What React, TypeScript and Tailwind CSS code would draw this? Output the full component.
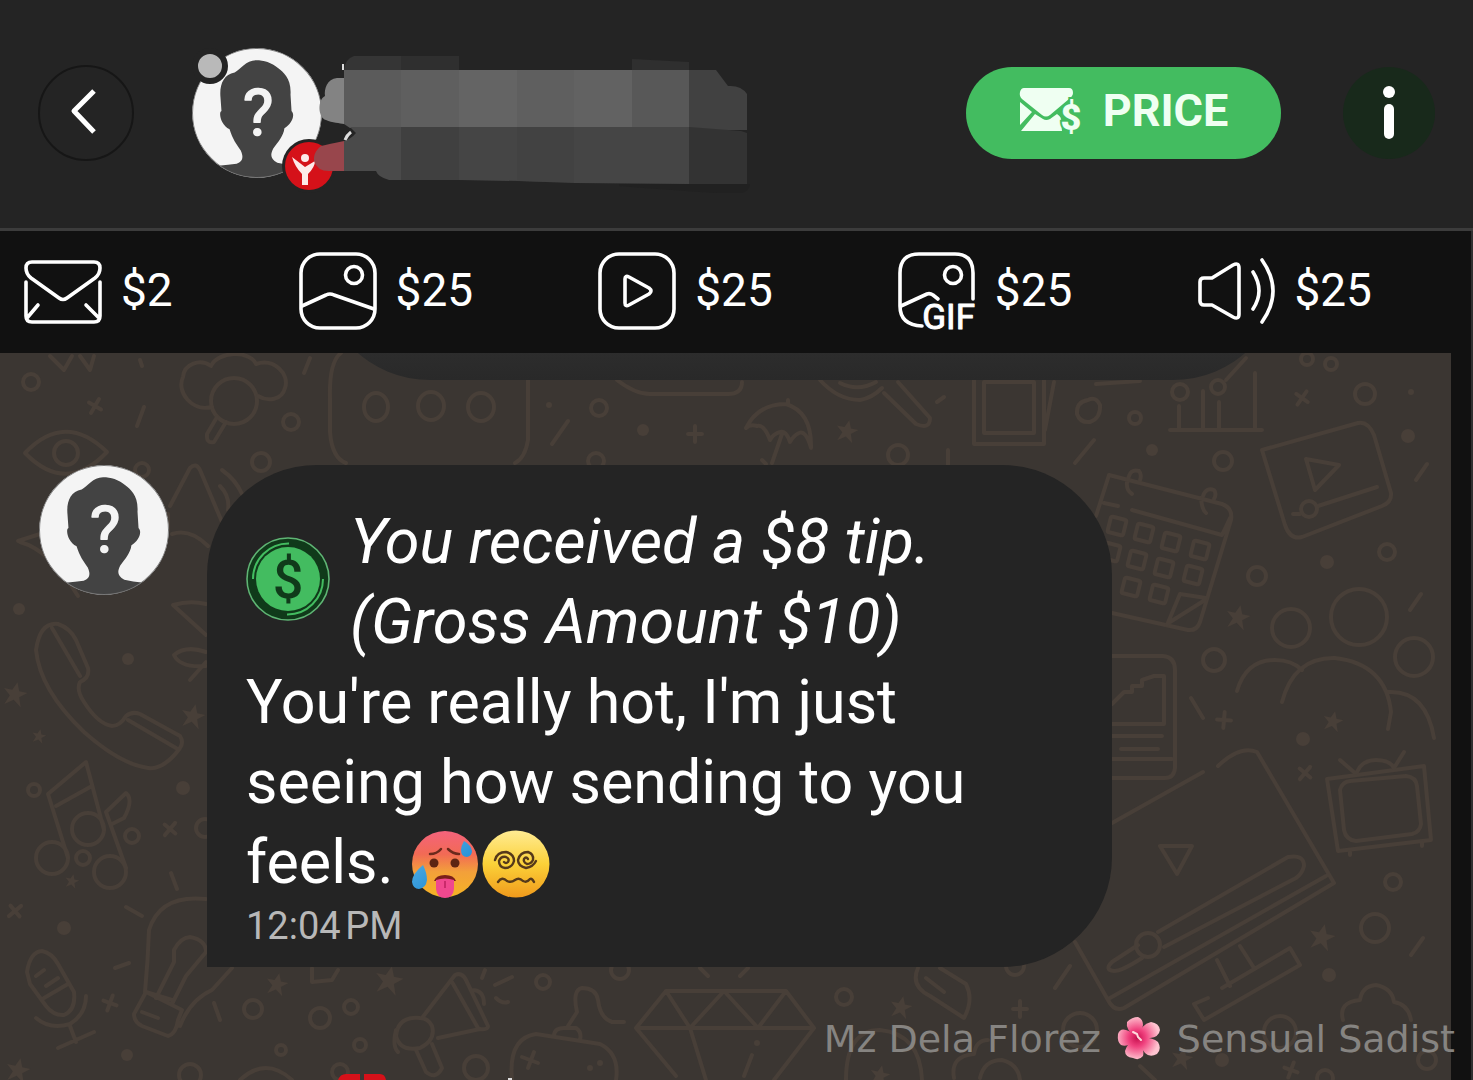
import React from "react";

const STAR = "M0 -10 L3 -3 L10 -3 L4 2 L7 10 L0 5 L-7 10 L-4 2 L-10 -3 L-3 -3 Z";

const rings: [number, number, number][] = [
  [31, 382, 8], [291, 422, 8], [261, 462, 9], [142, 470, 7], [599, 408, 8], [596, 461, 8], [898, 455, 10],
  [1223, 461, 9], [1365, 394, 10], [1307, 359, 6], [1331, 364, 6], [1135, 418, 6], [1257, 576, 9],
  [1387, 552, 8], [1291, 628, 19], [1359, 617, 28], [1414, 657, 19], [1214, 660, 11], [1393, 882, 8],
  [1375, 928, 14], [34, 790, 6], [52, 858, 16], [88, 829, 16], [110, 872, 16], [83, 858, 7], [132, 836, 7],
  [205, 828, 9], [253, 1009, 9], [320, 1018, 10], [351, 1007, 7], [360, 1045, 6], [281, 1050, 5],
  [190, 1075, 11], [340, 1072, 8], [543, 982, 7], [476, 1068, 12], [620, 970, 9], [844, 997, 8],
  [1080, 1030, 17], [1280, 1032, 16], [1427, 1060, 9], [1015, 966, 9], [1325, 1078, 8],
];

const dots: [number, number, number][] = [
  [549, 405, 3], [643, 430, 6], [1152, 450, 6], [1408, 436, 7], [1327, 562, 7], [1303, 739, 7],
  [1329, 975, 7], [19, 609, 6], [128, 659, 6], [183, 788, 7], [64, 928, 7], [127, 1055, 6], [1411, 392, 3],
  [1222, 1060, 7], [757, 1043, 3], [590, 1068, 3], [600, 1063, 3],
];

const stars: [number, number, number][] = [
  [847, 431, 1.1], [1238, 617, 1.2], [1333, 721, 1], [1322, 937, 1.3], [15, 694, 1.2], [39, 736, 0.7],
  [193, 716, 1.2], [72, 881, 0.7], [277, 984, 1.1], [389, 980, 1.4], [18, 1070, 1.2], [901, 1007, 1.1],
  [1182, 1058, 1.1], [880, 1075, 1],
];

const crosses: [number, number, number][] = [
  [95, 406, 30], [695, 434, 0], [1302, 398, 35], [1224, 720, 5], [1305, 773, 40], [170, 829, 40],
  [110, 1003, 20], [1020, 1009, 0], [1291, 1070, 20], [15, 911, 50],
];

const ticks =
  "M144 407L137 426 M568 421L552 444 M944 397L937 402 M1094 440L1075 463 M1427 464L1416 480 M1421 594L1410 610 M1191 698L1203 718 M1423 938L1411 955 M1070 966L1055 988 M171 873L177 889 M126 907L142 916 M115 968L129 963 M214 1003L220 1020 M140 360L142 366 M310 358L304 373 M948 450L948 465 M495 985L512 977 M482 978L485 970 M496 998Q502 1004 508 1002 M700 968L708 976 M748 968L740 976";

function Wallpaper() {
  return (
    <svg
      className="absolute inset-0 h-full w-full"
      viewBox="0 353 1451 727"
      preserveAspectRatio="xMinYMin slice"
      fill="none"
      stroke="#483f38"
      strokeWidth="4"
      strokeLinecap="round"
      strokeLinejoin="round"
      aria-hidden="true"
    >
      {rings.map(([x, y, r]) => (
        <circle key={`${x}-${y}`} cx={x} cy={y} r={r} />
      ))}
      {dots.map(([x, y, r]) => (
        <circle key={`${x}-${y}`} cx={x} cy={y} r={r} fill="#483f38" stroke="none" />
      ))}
      {stars.map(([x, y, s]) => (
        <path key={`${x}-${y}`} d={STAR} transform={`translate(${x} ${y}) rotate(12) scale(${s})`} fill="#483f38" stroke="none" />
      ))}
      {crosses.map(([x, y, a]) => (
        <path key={`${x}-${y}`} d="M0 -8V8M-7 0H7" transform={`translate(${x} ${y}) rotate(${a})`} />
      ))}
      <path d={ticks} />
      {/* eye */}
      <path d="M25 453Q65 411 107 452Q66 495 25 453Z" />
      <circle cx="66" cy="453" r="12" />
      {/* tree */}
      <circle cx="234" cy="401" r="23" />
      <path d="M212 407C192 412 176 392 183 377C184 364 200 358 211 366C218 351 250 350 256 364C274 358 290 374 285 388C282 400 268 402 258 396" />
      <path d="M217 417L207 434Q206 444 214 442L226 422" />
      <path d="M50 356L64 370L72 356 M80 356L90 370L94 356" />
      {/* game pad */}
      <path d="M341 353Q329 362 330 398V432Q332 458 346 463 M528 380V440Q525 458 515 463" />
      <ellipse cx="376" cy="407" rx="12" ry="14" />
      <ellipse cx="431" cy="406" rx="13" ry="14" />
      <ellipse cx="481" cy="407" rx="13" ry="14" />
      <path d="M617 380Q635 394 650 394H728Q742 394 742 382" />
      {/* umbrella */}
      <path d="M746 428Q758 404 786 404Q812 412 811 448Q806 430 799 433Q794 435 790 442Q786 430 780 432Q773 434 770 440Q764 424 757 426Q750 424 746 428Z M788 400V404 M782 434L772 463 M762 460L766 464" />
      {/* magnifier */}
      <path d="M820 380Q838 400 860 400Q872 398 882 388 M840 383Q858 392 876 382 M884 393L916 424Q930 430 930 418L898 382" />
      {/* picture frame */}
      <path d="M974 380V444H1044V380 M984 382H1034V433H984Z M1045 430L1054 382" />
      <path d="M1088 400Q1076 402 1077 414Q1080 423 1090 422Q1101 418 1100 405Q1096 396 1088 400Z" />
      {/* chart */}
      <path d="M1170 430H1262 M1179 406V430 M1203 391V430 M1219 402V430 M1255 373V430 M1096 384L1140 381 M1226 380L1246 358" />
      <circle cx="1180" cy="392" r="8" />
      <circle cx="1218" cy="387" r="7" />
      {/* video card */}
      <path d="M1262 450L1358 423Q1368 421 1374 435L1391 493Q1392 502 1382 506L1302 537Q1290 540 1285 525Z M1306 459L1339 465L1315 490Z M1318 506L1377 487 M1293 514H1300" />
      <circle cx="1309" cy="509" r="8" />
      {/* calendar */}
      <path d="M1096 516L1109 475L1222 504Q1233 508 1231 520L1200 622Q1197 631 1188 630L1112 613 M1132 510L1222 535L1230 518 M1104 503L1118 506 M1127 482Q1126 490 1132 494 M1201 498Q1202 510 1206 513" />
      <path d="M1128 480Q1130 468 1139 471Q1142 475 1140 480 M1203 496Q1206 487 1214 490Q1217 494 1214 499" />
      <g>
        {[
          [1117, 526], [1144, 533], [1171, 542], [1200, 550], [1111, 552], [1137, 560], [1164, 568], [1193, 575], [1131, 587], [1159, 594],
        ].map(([x, y]) => (
          <rect key={`${x}-${y}`} x={x - 8} y={y - 8} width="16" height="16" rx="2" transform={`rotate(14 ${x} ${y})`} />
        ))}
      </g>
      <path d="M1167 625L1180 594L1206 598 M1170 622L1205 600" />
      {/* balloons and cloud */}
      <path d="M1237 691Q1246 660 1275 660Q1292 660 1302 670 M1282 702Q1294 657 1335 658Q1386 664 1391 712L1388 729 M1388 692Q1426 690 1434 738" />
      {/* phone with graph */}
      <path d="M1112 656H1163Q1175 657 1175 670V768Q1174 778 1165 778H1112 M1112 704L1124 692H1132V686H1142V680L1154 676H1164V724H1112 M1112 736H1162 M1121 749H1158 M1112 759H1172" />
      {/* television */}
      <path d="M1327 779L1424 766L1431 840L1338 851Z" />
      <path d="M1340 790Q1342 782 1350 781L1406 776Q1416 777 1417 786L1421 824Q1420 832 1412 834L1356 841Q1346 840 1344 830Z M1357 772Q1362 760 1376 760Q1390 760 1394 768 M1340 760L1355 773 M1404 752L1394 768 M1350 852V855 M1422 842V846" />
      {/* large monitor */}
      <path d="M1112 823L1203 772 M1218 766Q1240 745 1257 752L1334 883L1124 1008Q1114 1012 1108 1000L1075 942 M1110 998L1326 876 M1160 846H1192L1177 874Z" />
      <path d="M1158 932L1288 857Q1304 854 1304 866Q1302 874 1296 878L1164 947 M1138 945L1112 962Q1104 970 1114 971Q1122 971 1142 958" />
      <circle cx="1148" cy="945" r="12" />
      <path d="M1217 960L1230 986 M1240 946L1254 968 M1222 988L1290 948L1300 965L1204 1020L1194 1004L1208 998" />
      {/* small cloud */}
      <path d="M1343 1020Q1338 1002 1360 1000Q1362 986 1376 985Q1392 988 1394 1002Q1408 1004 1411 1020" />
      {/* telephone */}
      <path d="M36 650Q40 622 58 624Q70 628 76 640L88 668Q90 678 80 682Q76 690 84 702Q98 724 112 726Q120 726 126 716Q132 711 140 714L180 736Q184 742 180 748Q164 770 148 768Q120 764 84 732Q40 690 36 650Z M52 628L80 676 M128 720L176 748" />
      {/* speaker */}
      <path d="M170 506L190 468Q196 462 200 470L222 522 M172 534Q190 528 208 546 M222 470Q236 480 242 494 M220 486Q230 496 228 510 M168 514V530" />
      <path d="M173 605Q190 600 206 604 M173 605L206 635 M206 652Q186 645 174 655Q180 668 206 666 M190 680L206 662" />
      <path d="M18 541L40 534 M20 542Q50 550 78 596" />
      {/* music notes */}
      <path d="M68 858L48 794L86 762L104 830 M56 806L92 786 M126 868L106 812L126 793Q134 800 124 818L112 824" />
      {/* light bulb */}
      <path d="M206 899Q160 894 149 930Q148 960 145 992 M232 968L212 990Q190 1000 180 1026 M172 1000L146 992L134 1014Q134 1022 142 1026L168 1036Q176 1034 178 1020L182 1010L146 992 M156 998L174 962V950Q180 938 190 937Q206 940 206 952L186 976L172 1004 M142 1012L158 1018" />
      {/* microphone */}
      <path d="M27 972Q30 952 42 951Q52 953 58 964L74 992Q76 1010 64 1015Q54 1016 46 1006L30 984Z M36 976L44 970 M46 986L58 978 M44 998L68 984 M36 1018Q50 1030 70 1024Q86 1014 86 996 M70 1026L76 1042 M58 1048L94 1032" />
      {/* loudspeaker */}
      <path d="M422 1018L455 975Q462 972 466 980L488 1026Q488 1030 480 1029L438 1038 M452 982L478 1028 M472 990Q484 990 484 1004 M420 1018Q398 1016 396 1036Q400 1052 420 1048Q436 1040 432 1026Q428 1018 420 1018Z M416 1050L426 1072Q436 1080 442 1068L432 1044" />
      {/* controller and joystick */}
      <path d="M512 1080Q508 1038 536 1034L600 1044Q620 1054 616 1080 M554 1036Q554 1028 564 1028H576Q582 1032 580 1040 M568 1026L577 1012Q572 990 582 988Q596 988 598 1000Q600 1018 612 1022H624 M522 1057L538 1063 M534 1052L528 1068" />
      {/* diamond */}
      <path d="M636 1028L666 991H786L814 1028H636L676 1076 M666 991L690 1028L724 991L758 1028L786 991 M690 1028L706 1080 M814 1028L774 1080 M752 1055L744 1076" />
      {/* knife and badge */}
      <path d="M918 968Q910 986 930 996L964 1018Q974 1000 966 984L940 968 M926 978L944 992" />
      <path d="M846 1080Q846 1030 880 1030Q920 1034 922 1080 M954 1078Q950 1056 974 1054Q976 1040 988 1040 M980 1078Q984 1060 1002 1060Q1018 1064 1020 1080" />
      <path d="M312 968V982L332 980L338 970 M398 1052Q392 1046 396 1030 M240 1080Q266 1056 292 1080 M1140 1066L1155 1080" />
    </svg>
  );
}

function Avatar() {
  return (
    <svg className="size-[130px] shrink-0 rounded-full" viewBox="0 0 128 128" role="img" aria-label="Anonymous user">
      <circle cx="64" cy="64" r="64" fill="#f4f4f4" />
      <path
        d="M63 12C53 12 48 21 42 24C31 26 27 36 28 48L29 62C26 63 28 76 37 80C40 90 44 95 48 101C51 108 50 112 44 114Q36 115 26 116Q44 128 64 128Q86 128 103 116Q92 115 84 113C77 109 77 105 80 99C85 92 90 87 91 79C98 75 102 66 98 62L97 46C98 30 90 24 85 20C78 14 71 12 63 12Z"
        fill="#434343"
      />
      <text
        x="65"
        y="86"
        textAnchor="middle"
        fontFamily="Roboto, sans-serif"
        fontSize="64"
        fill="#f4f4f4"
        stroke="#f4f4f4"
        strokeWidth="1.500"
        strokeLinejoin="round"
      >
        ?
      </text>
      <circle cx="64" cy="64" r="63.500" fill="none" stroke="#777" strokeWidth="1" />
    </svg>
  );
}

function HiddenName() {
  return (
    <svg className="relative -ml-2 h-40 w-[440px] shrink-0" viewBox="315 34 440 160" role="img" aria-label="Name hidden">
      <path d="M345 79H338C328 80 325 90 326 97C318 101 319 119 327 121C333 124 341 124 345 125Z" fill="#838383" />
      <path d="M345 71Q346 60 355 57H402V71Z" fill="#353535" />
      <path d="M402 57H460V71H402Z" fill="#2f2f2f" />
      <path d="M633 60L690 63V71H633Z" fill="#2f2f2f" />
      <path d="M345 71H402V129H351L345 125Z" fill="#5b5b5b" />
      <path d="M402 71H460V129H402Z" fill="#5f5f5f" />
      <path d="M460 71H518V129H460Z" fill="#646464" />
      <path d="M518 71H575V129H518Z" fill="#5f5f5f" />
      <path d="M575 71H633V129H575Z" fill="#626262" />
      <path d="M633 71H690V129H633Z" fill="#585858" />
      <path d="M690 71H717L729 87Q742 86 748 95V131H690Z" fill="#414141" />
      <path d="M351 128H402V181H390Q379 178 377 172H345V142Q352 140 357 134Z" fill="#4a4a4a" />
      <path d="M402 128H460V181H402Z" fill="#404040" />
      <path d="M460 128H575V183L460 181Z" fill="#454545" />
      <path d="M518 128H575V184L518 182Z" fill="#424242" />
      <path d="M575 128H690V185L575 184Z" fill="#454545" />
      <path d="M690 128L742 132L748 134V185H690Z" fill="#333" />
      <path d="M620 185H751Q750 195 735 195Q680 192 620 187Z" fill="#212121" />
      <path d="M345 142Q330 145 322 147Q314 153 315 162Q318 172 330 172H345Z" fill="#98464c" />
      <path d="M346 141Q348 136 352 133" stroke="#ddd" strokeWidth="3" fill="none" />
      <path d="M344 65V71" stroke="#ddd" strokeWidth="2" />
    </svg>
  );
}

function PriceButton() {
  return (
    <button type="button" className="flex h-[92px] w-[315px] shrink-0 items-center justify-center gap-4 rounded-full bg-[#43bc60] pb-1 text-white">
      <svg className="h-14 w-[68px]" viewBox="0 -4 68 56" aria-hidden="true">
        <path d="M5 1H50Q54 1 54 6Q54 9 50 12L31 28Q27 31 23 28L3 12Q0 9 1 5Q2 1 5 1Z" fill="#effff2" />
        <path d="M1 15L13 25L1 38Z M16 27L24 32Q27 34 31 32L38 27Q43 30 42 35L43 44H2Z" fill="#effff2" />
        <text x="52" y="43" textAnchor="middle" fontFamily="Roboto, sans-serif" fontWeight="900" fontSize="36" fill="#effff2" stroke="#43bc60" strokeWidth="4" paintOrder="stroke">
          $
        </text>
      </svg>
      <span className="text-[45px] leading-[52px] font-bold text-[#effff2]">PRICE</span>
    </button>
  );
}

const iconProps = {
  className: "size-20 shrink-0 overflow-visible",
  viewBox: "0 0 80 80",
  fill: "none",
  stroke: "#fff",
  strokeWidth: 3.6,
  strokeLinecap: "round" as const,
  strokeLinejoin: "round" as const,
  "aria-hidden": true,
};

function MailIcon() {
  return (
    <svg {...iconProps}>
      <path d="M9 11H71Q77 11 77 17Q77 23 72 27L44 47Q40 50 36 47L8 27Q3 23 3 17Q3 11 9 11Z" />
      <path d="M3 31V65Q3 71 9 71H71Q77 71 77 65V31 M4 67L15 54 M76 67L63 54" />
    </svg>
  );
}
function ImageIcon() {
  return (
    <svg {...iconProps}>
      <rect x="3" y="3" width="74" height="74" rx="19" />
      <circle cx="56" cy="24" r="8.500" />
      <path d="M4 55L28 44Q32 42 36 44L76 58" />
    </svg>
  );
}
function VideoIcon() {
  return (
    <svg {...iconProps}>
      <rect x="3" y="3" width="74" height="74" rx="19" />
      <path d="M28 28Q28 24 32 26L52 37Q56 40 52 43L32 54Q28 56 28 52Z" />
    </svg>
  );
}
function GifIcon() {
  return (
    <svg {...iconProps}>
      <path d="M25 75Q3 74 3 55V22Q3 3 22 3H58Q76 3 76 22V48" />
      <circle cx="56" cy="24" r="8.500" />
      <path d="M4 55L30 43Q33 42 36 44L41 48" />
      <text x="78" y="78" textAnchor="end" fontFamily="Roboto, sans-serif" fontSize="35" fill="#fff" strokeWidth="1">
        GIF
      </text>
    </svg>
  );
}
function AudioIcon() {
  return (
    <svg {...iconProps}>
      <path d="M8 27H16L37 14Q43 11 43 17V63Q43 69 37 66L16 54H8Q4 54 4 50V31Q4 27 8 27Z" />
      <path d="M57 21Q69 40 57 58 M66 9Q88 40 66 71" />
    </svg>
  );
}

const prices = [
  { label: "Message", price: "$2", Icon: MailIcon },
  { label: "Photo", price: "$25", Icon: ImageIcon },
  { label: "Video", price: "$25", Icon: VideoIcon },
  { label: "GIF", price: "$25", Icon: GifIcon },
  { label: "Audio", price: "$25", Icon: AudioIcon },
];

function CoinIcon() {
  return (
    <svg className="size-[84px] shrink-0" viewBox="0 0 84 84" fill="none" aria-hidden="true">
      <circle cx="42" cy="42" r="41" fill="#103a1a" stroke="#5fb574" strokeWidth="1.600" />
      <circle cx="42" cy="42" r="32" fill="#43bc60" />
      <path d="M7 42A35.500 35.500 0 0 1 43 6.500 M77 42A35.500 35.500 0 0 1 41 77.500" stroke="#43bc60" strokeWidth="2" />
      <text x="42" y="61" textAnchor="middle" fontFamily="Roboto, sans-serif" fontWeight="500" fontSize="54" fill="#103a1a">
        $
      </text>
    </svg>
  );
}

function HotFace() {
  return (
    <svg className="inline-block size-[70px] align-[-16px]" viewBox="0 0 70 70" role="img" aria-label="Hot face">
      <defs>
        <linearGradient id="hot" x1="0" y1="0" x2="0" y2="1">
          <stop offset="0" stopColor="#f4637c" />
          <stop offset="0.35" stopColor="#f26a55" />
          <stop offset="0.62" stopColor="#f3a03a" />
          <stop offset="1" stopColor="#f5b325" />
        </linearGradient>
        <linearGradient id="drop" x1="0" y1="0" x2="1" y2="1">
          <stop offset="0" stopColor="#62b7e6" />
          <stop offset="1" stopColor="#0b7fd0" />
        </linearGradient>
      </defs>
      <circle cx="36" cy="35" r="33" fill="url(#hot)" />
      <path d="M21 25Q28 25 32 20 M39 20Q44 25 50 25" fill="none" stroke="#6b2a1c" strokeWidth="2.500" strokeLinecap="round" />
      <circle cx="25" cy="34" r="4.500" fill="#5d2413" />
      <circle cx="46" cy="34" r="4.500" fill="#5d2413" />
      <path d="M25 52Q27 46 36 46Q45 46 47 52Z" fill="#7a1f1a" />
      <path d="M27 51Q36 48 45 51V60Q44 69 36 69Q28 69 27 60Z" fill="#f0488f" />
      <path d="M36 52V59" stroke="#c92a6b" strokeWidth="2" />
      <path d="M55 12Q52 17 52 21Q52 28 58 28Q63 27 63 22Q62 16 55 12Z M14 36Q3 45 3 53Q4 60 10 60Q17 59 18 51Q18 44 14 36Z" fill="url(#drop)" />
    </svg>
  );
}

function DizzyFace() {
  return (
    <svg className="ml-[2px] inline-block size-[70px] align-[-16px]" viewBox="0 0 70 70" role="img" aria-label="Face with spiral eyes">
      <defs>
        <linearGradient id="dizzy" x1="0" y1="0" x2="0" y2="1">
          <stop offset="0" stopColor="#ffeb93" />
          <stop offset="0.5" stopColor="#fbd138" />
          <stop offset="1" stopColor="#f09a1c" />
        </linearGradient>
      </defs>
      <circle cx="35" cy="35" r="33.500" fill="url(#dizzy)" />
      <g fill="none" stroke="#55391a" strokeWidth="2.400" strokeLinecap="round">
        <path d="M14 31Q16 23 25 23Q33 25 33 32Q31 39 24 39Q18 38 18 32Q20 27 25 28Q29 30 27 33Q25 35 23 33" />
        <path d="M55 32Q52 38 45 39Q37 37 37 31Q39 23 47 23Q53 25 52 31Q50 35 46 35Q42 33 43 30Q45 27 47 30" />
        <path d="M17 53Q21 47 26 52Q30 54 34 51Q38 48 42 52Q46 54 49 50Q51 49 53 53" />
      </g>
    </svg>
  );
}

function Flower() {
  return (
    <svg className="mx-4 inline-block size-11 align-[-8px]" viewBox="0 0 44 44" role="img" aria-label="Hibiscus">
      <defs>
        <radialGradient id="petal" gradientUnits="userSpaceOnUse" cx="20" cy="22" r="22">
          <stop offset="0" stopColor="#c8104f" />
          <stop offset="0.4" stopColor="#f0437f" />
          <stop offset="1" stopColor="#ffc4d0" />
        </radialGradient>
      </defs>
      <g fill="url(#petal)">
        <path d="M20 22Q8 14 10 6Q15 1 21 1Q26 3 26 9Q25 15 20 22Z" />
        <path d="M20 22Q24 8 34 6Q42 7 43 14Q42 21 33 22Q26 23 20 22Z" />
        <path d="M20 22Q34 20 41 26Q45 33 40 38Q33 42 28 37Q22 30 20 22Z" />
        <path d="M20 22Q28 33 26 40Q22 45 16 42Q8 41 8 35Q10 27 20 22Z" />
        <path d="M20 22Q12 32 4 29Q0 26 1 18Q3 12 9 14Q16 16 20 22Z" />
      </g>
      <path d="M16 16L20 18L21 21L24 24" fill="none" stroke="#ffd9dc" strokeWidth="2" strokeLinecap="round" />
    </svg>
  );
}

export default function App() {
  return (
    <div className="relative flex h-screen flex-col overflow-hidden bg-[#111] font-['Roboto',sans-serif] text-white">
      <header className="flex h-[231px] shrink-0 items-center border-b-[3px] border-[#3c3c3c] bg-[#242424] px-[38px] pb-[2px]">
        <button type="button" aria-label="Back" className="flex size-24 shrink-0 items-center justify-center rounded-full border-2 border-[#161616]">
          <svg className="mr-1 mb-1 h-12 w-8" viewBox="0 0 32 48" fill="none" stroke="#fff" strokeWidth="5" aria-hidden="true">
            <path d="M26 4L6 24L26 45" strokeLinejoin="round" />
          </svg>
        </button>
        <div className="relative ml-[58px] shrink-0">
          <Avatar />
          <span className="absolute top-0 left-0 size-9 rounded-full border-[6px] border-[#242424] bg-[#b9b9b9]" />
          <svg className="absolute -right-[14px] -bottom-[15px] size-[54px]" viewBox="0 0 54 54" aria-hidden="true">
            <circle cx="27" cy="27" r="27" fill="#242424" />
            <circle cx="27" cy="27" r="24" fill="#d51119" />
            <circle cx="23" cy="19" r="4" fill="#fdeaea" />
            <path d="M10 18L23 28L33 22Q33 28 26 35V46H20V35Q13 28 10 18Z" fill="#fdeaea" />
          </svg>
        </div>
        <HiddenName />
        <div className="ml-auto flex shrink-0 items-center gap-[62px]">
          <PriceButton />
          <button type="button" aria-label="Information" className="flex size-[92px] items-center justify-center rounded-full bg-[#18291b]">
            <svg className="h-14 w-4" viewBox="0 0 16 56" fill="#fff" aria-hidden="true">
              <circle cx="8" cy="7" r="6" />
              <rect x="3" y="19" width="10" height="35" rx="5" />
            </svg>
          </button>
        </div>
      </header>

      <div className="flex min-h-0 grow flex-col border-r-2 border-[#303030]">
        <ul className="grid h-[122px] shrink-0 grid-cols-[275fr_300fr_300fr_300fr_275fr] items-center pb-[2px] pl-[23px]">
          {prices.map(({ label, price, Icon }) => (
            <li key={label} className="flex items-center gap-[18px]" aria-label={label}>
              <Icon />
              <span className="pb-[2px] text-[46px] leading-[56px]">{price}</span>
            </li>
          ))}
        </ul>

        <main className="relative mr-5 min-h-0 grow overflow-hidden bg-[#3b3632]">
          <Wallpaper />
          <div className="relative">
            <div className="flex h-[27px] items-end overflow-hidden pr-[168px] pl-[320px]">
              <div className="h-[220px] grow rounded-[110px] bg-linear-to-t from-[#292929] to-[#484848]" />
            </div>
            <article className="mt-[85px] flex items-start gap-[38px] pl-[39px]">
              <Avatar />
              <div className="w-[905px] rounded-[110px] rounded-bl-none bg-[#242424] px-[39px] pt-[37px] pb-[17px]">
                <div className="flex items-center gap-5">
                  <div className="pb-[6px]">
                    <CoinIcon />
                  </div>
                  <p className="text-[63px] leading-[80px] italic">
                    You received a $8 tip.
                    <br />
                    (Gross Amount $10)
                  </p>
                </div>
                <p className="text-[61px] leading-[80px]">
                  You're really hot, I'm just seeing how sending to you feels.{" "}
                  <span className="whitespace-nowrap">
                    <HotFace />
                    <DizzyFace />
                  </span>
                </p>
                <time className="block text-[38px] leading-[48px] text-[#b8b8b8]">12:04{"\u202F"}PM</time>
              </div>
            </article>
            <div className="mt-[107px] flex items-start pl-[337px]">
              <svg className="h-12 w-[50px]" viewBox="0 0 50 48" fill="#d51119" aria-hidden="true">
                <path d="M1 6Q3 0 9 0H23V48H1Z M27 0H43Q48 0 49 6V48H27Z" />
              </svg>
              <svg className="ml-[118px] h-10 w-2" viewBox="0 0 8 40" aria-hidden="true">
                <path d="M3 4H7V40H3Z" fill="#ddd" />
              </svg>
            </div>
          </div>
        </main>
      </div>

      <p className="absolute right-[18px] bottom-[17px] font-['DejaVu_Sans',sans-serif] text-[38px] leading-[48px] whitespace-nowrap text-[#868481]">
        Mz Dela Florez
        <Flower />
        Sensual Sadist
      </p>
    </div>
  );
}
